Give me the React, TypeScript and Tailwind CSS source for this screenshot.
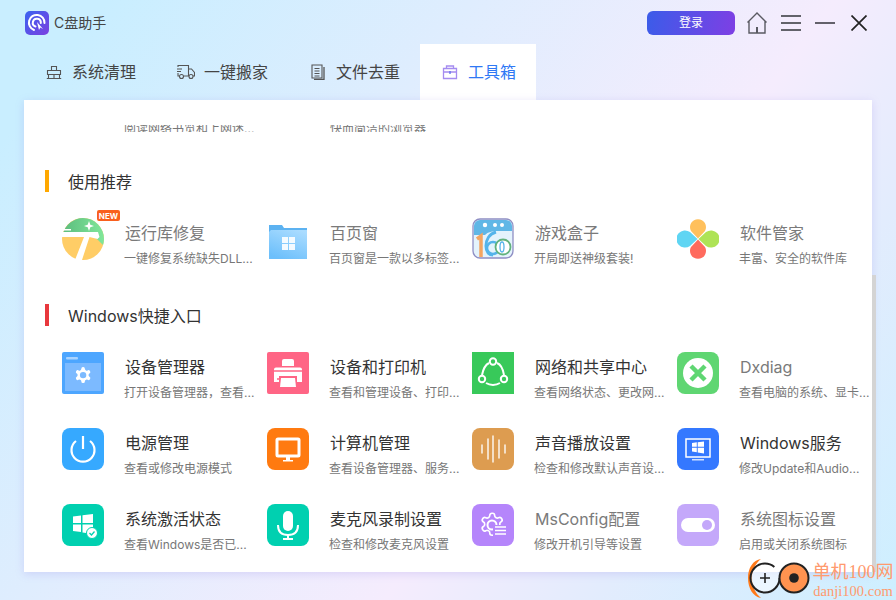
const GEAR =
  "M12.22 2h-.44a2 2 0 0 0-2 2v.18a2 2 0 0 1-1 1.73l-.43.25a2 2 0 0 1-2 0l-.15-.08a2 2 0 0 0-2.73.73l-.22.38a2 2 0 0 0 .73 2.73l.15.1a2 2 0 0 1 1 1.72v.51a2 2 0 0 1-1 1.74l-.15.09a2 2 0 0 0-.73 2.73l.22.38a2 2 0 0 0 2.73.73l.15-.08a2 2 0 0 1 2 0l.43.25a2 2 0 0 1 1 1.73V20a2 2 0 0 0 2 2h.44a2 2 0 0 0 2-2v-.18a2 2 0 0 1 1-1.73l.43-.25a2 2 0 0 1 2 0l.15.08a2 2 0 0 0 2.73-.73l.22-.39a2 2 0 0 0-.73-2.73l-.15-.08a2 2 0 0 1-1-1.74v-.5a2 2 0 0 1 1-1.74l.15-.09a2 2 0 0 0 .73-2.73l-.22-.38a2 2 0 0 0-2.73-.73l-.15.08a2 2 0 0 1-2 0l-.43-.25a2 2 0 0 1-1-1.73V4a2 2 0 0 0-2-2z";

function Svg({ children, className = "" }: { children: React.ReactNode; className?: string }) {
  return (
    <svg viewBox="0 0 42 42" className={"w-[42px] h-[42px] shrink-0 " + className}>
      {children}
    </svg>
  );
}

const RuntimeIcon = () => (
  <Svg>
    <defs>
      <linearGradient id="rtg" x1="0" y1="0" x2="1" y2="0">
        <stop offset="0" stopColor="#5dbd7e" />
        <stop offset="1" stopColor="#80e79a" />
      </linearGradient>
    </defs>
    <circle cx="21" cy="21" r="21" fill="#ffcd66" />
    <path d="M21 0a21 21 0 0 1 21 21 21 21 0 0 1-1 6L36 22 28 16H1A21 21 0 0 1 21 0z" fill="url(#rtg)" />
    <path d="M0 11h9v1.500H0zM0 14h36l1.500 5-2 2-8-2L20 42h-7l9-23H0z" fill="#fff" />
    <path d="M27 3l1.300 3.700L32 8l-3.700 1.300L27 13l-1.300-3.700L22 8l3.700-1.300z" fill="#fff" />
  </Svg>
);

const FolderIcon = () => (
  <Svg>
    <defs>
      <linearGradient id="fdg" x1="0.8" y1="0" x2="0.3" y2="1">
        <stop offset="0" stopColor="#aadcff" />
        <stop offset="1" stopColor="#6cbffb" />
      </linearGradient>
    </defs>
    <path d="M2 7h13l2 3h23v8H2z" fill="#5cb2f1" />
    <path d="M4 12h36v29H2V14z" fill="url(#fdg)" />
    <path d="M17 20h6v6h-6zM24 20h6v6h-6zM17 27h6v6h-6zM24 27h6v6h-6z" fill="#fff" fillOpacity="0.9" transform="translate(-2 -1)" />
  </Svg>
);

const GameIcon = () => (
  <Svg>
    <rect x="1" y="1" width="40" height="39" rx="7" fill="#e4f3fc" stroke="#8f8fc4" strokeWidth="1.300" />
    <path d="M2 8a6 6 0 0 1 6-6h26a6 6 0 0 1 6 6v5H26c-6 0-10 1-13 4H2z" fill="#60b7e6" />
    <circle cx="13" cy="7" r="2.200" fill="#fff" />
    <circle cx="23" cy="7" r="2" fill="#fff" />
    <circle cx="30" cy="7" r="2" fill="#fff" />
    <path d="M5 21l4-3v21" fill="none" stroke="#f3a561" strokeWidth="3.500" />
    <path d="M24 14c-7 2-10 8-10 14 0 6 3 9 7 9" fill="none" stroke="#55b4ea" strokeWidth="3" />
    <circle cx="21" cy="30" r="6" fill="none" stroke="#55b4ea" strokeWidth="2.500" />
    <circle cx="31" cy="29" r="7.500" fill="#fff" stroke="#61b27d" strokeWidth="1.800" />
    <ellipse cx="30" cy="29" rx="2" ry="5" fill="none" stroke="#55b4ea" strokeWidth="1.300" />
  </Svg>
);

const CloverIcon = () => (
  <Svg>
    <path d="M21 20.500L14 13a8 8 0 1 1 14 0z" fill="#ffc05c" />
    <path d="M21.500 21L29 14a8.600 8.600 0 1 1 0 14z" fill="#aee356" />
    <path d="M21 21.500L28 29a8 8 0 1 1-14 0z" fill="#ff6b5e" />
    <path d="M20.500 21L13 28a8.600 8.600 0 1 1 0-14z" fill="#5fd5f3" />
  </Svg>
);

const DeviceIcon = () => (
  <Svg className="bg-[#4da6ff] rounded-[2px]">
    <rect x="3" y="11" width="36" height="28" fill="#7cbaff" />
    <rect x="4" y="5" width="12" height="2.500" rx="1" fill="#a9d3ff" />
    <g transform="translate(11.500 13.500) scale(0.8)">
      <path d={GEAR} fill="#fff" />
      <circle cx="12" cy="12" r="4" fill="#7cbaff" />
    </g>
  </Svg>
);

const PrinterIcon = () => (
  <Svg className="bg-[#ff6585] rounded-[2px]">
    <path d="M15 14v-5a2 2 0 0 1 2-2h8a2 2 0 0 1 2 2v5z" fill="#fff" />
    <path d="M9 15.500h24a2 2 0 0 1 2 2V30h-5v-6H12v6H7V17.500a2 2 0 0 1 2-2z" fill="#fff" />
    <path d="M7 19h28" stroke="#ff6585" strokeWidth="1.500" />
    <path d="M14 26h14l1 9H13z" fill="#fff" />
    <circle cx="11" cy="27" r="1" fill="#ff6585" />
  </Svg>
);

const NetworkIcon = () => (
  <Svg className="bg-[#38c95a]">
    <g fill="none" stroke="#fff" strokeWidth="2">
      <circle cx="21" cy="9.500" r="3.200" />
      <circle cx="10" cy="27" r="3.200" />
      <circle cx="32" cy="27" r="3.200" />
      <path d="M25 11c4 1.500 6 6 7 12" />
      <path d="M17 11c-4 2-6 7-7 12" />
      <path d="M14 31c4 2.500 10 2.500 14 0" />
    </g>
  </Svg>
);

const DxIcon = () => (
  <Svg className="bg-[#5fd672] rounded-lg">
    <circle cx="21" cy="21" r="15" fill="#fff" />
    <path d="M14 14l14 14M28 14L14 28" stroke="#5fd672" strokeWidth="4.500" />
  </Svg>
);

const PowerIcon = () => (
  <Svg className="bg-[#36a9ff] rounded-lg">
    <path d="M14 13a11.500 11.500 0 1 0 14 0" fill="none" stroke="#fff" strokeWidth="2.200" />
    <path d="M21 8v13" stroke="#fff" strokeWidth="2.200" />
  </Svg>
);

const MonitorIcon = () => (
  <Svg className="bg-[#ff7a10] rounded-lg">
    <rect x="10" y="11" width="22" height="17" rx="1" fill="#ff7a10" stroke="#fff" strokeWidth="3" />
    <path d="M19 29h4v3h-4zM16 32h10v1.500H16z" fill="#fff" />
  </Svg>
);

const SoundIcon = () => (
  <Svg className="bg-[#dd9c50] rounded-lg">
    <path d="M10 17v8M16 11v20M21 8v26M27 12v18M33 17v8" stroke="#fff" strokeWidth="1.500" strokeOpacity="0.9" strokeLinecap="round" />
  </Svg>
);

const WinPanes = ({ x, y, s }: { x: number; y: number; s: number }) => (
  <g transform={`translate(${x} ${y}) scale(${s})`}>
    <path d="M0 1.600L8 .5V8H0zM9.500 .3L20 -1v9H9.500zM0 9.500h8v7.500L0 16zM9.500 9.500H20V19l-10.500-1.500z" fill="#fff" />
  </g>
);

const WinServiceIcon = () => (
  <Svg className="bg-[#3478ff] rounded-lg">
    <rect x="9" y="11" width="24" height="18" fill="none" stroke="#fff" strokeWidth="1.500" />
    <path d="M15 31h12v1.500H15z" fill="#cfe0ff" />
    <WinPanes x={15} y={14} s={0.6} />
  </Svg>
);

const ActivateIcon = () => (
  <Svg className="bg-[#00d0b0] rounded-lg">
    <WinPanes x={11} y={11} s={1} />
    <circle cx="30" cy="29" r="5.500" fill="#fff" stroke="#00d0b0" strokeWidth="1" />
    <path d="M27.500 29l2 2 3-3.500" fill="none" stroke="#00d0b0" strokeWidth="1.300" />
  </Svg>
);

const MicIcon = () => (
  <Svg className="bg-[#00d0b0] rounded-lg">
    <rect x="16" y="7" width="10" height="20" rx="5" fill="#fff" />
    <path d="M11 21c0 7 4 10 10 10s10-3 10-10" fill="none" stroke="#fff" strokeWidth="2" />
    <path d="M21 31v3M16 35h10" stroke="#fff" strokeWidth="2" />
  </Svg>
);

const ConfigIcon = () => (
  <Svg className="bg-[#b585fb] rounded-lg">
    <g transform="translate(7 7) scale(1.100)">
      <path d={GEAR} fill="none" stroke="#fff" strokeWidth="1.500" />
    </g>
    <circle cx="20" cy="21" r="4.500" fill="none" stroke="#fff" strokeWidth="2" />
    <rect x="21" y="21" width="14" height="11" fill="#b585fb" />
    <path d="M23 23h11M23 26.500h11M23 30h11" stroke="#fff" strokeWidth="1.500" />
  </Svg>
);

const SwitchIcon = () => (
  <Svg className="bg-[#c4a8fa] rounded-lg">
    <rect x="4" y="14" width="34" height="14" rx="7" fill="#fff" />
    <circle cx="30" cy="21" r="5" fill="#c4a8fa" />
  </Svg>
);

const RECOMMEND = [
  { icon: <RuntimeIcon />, title: "运行库修复", sub: "一键修复系统缺失DLL...", dim: true, isNew: true },
  { icon: <FolderIcon />, title: "百页窗", sub: "百页窗是一款以多标签...", dim: true },
  { icon: <GameIcon />, title: "游戏盒子", sub: "开局即送神级套装!", dim: true },
  { icon: <CloverIcon />, title: "软件管家", sub: "丰富、安全的软件库", dim: true },
];

const SHORTCUTS = [
  { icon: <DeviceIcon />, title: "设备管理器", sub: "打开设备管理器\uFF0C查看..." },
  { icon: <PrinterIcon />, title: "设备和打印机", sub: "查看和管理设备、打印..." },
  { icon: <NetworkIcon />, title: "网络和共享中心", sub: "查看网络状态、更改网..." },
  { icon: <DxIcon />, title: "Dxdiag", sub: "查看电脑的系统、显卡...", dim: true },
  { icon: <PowerIcon />, title: "电源管理", sub: "查看或修改电源模式" },
  { icon: <MonitorIcon />, title: "计算机管理", sub: "查看设备管理器、服务..." },
  { icon: <SoundIcon />, title: "声音播放设置", sub: "检查和修改默认声音设..." },
  { icon: <WinServiceIcon />, title: "Windows服务", sub: "修改Update和Audio..." },
  { icon: <ActivateIcon />, title: "系统激活状态", sub: "查看Windows是否已..." },
  { icon: <MicIcon />, title: "麦克风录制设置", sub: "检查和修改麦克风设置" },
  { icon: <ConfigIcon />, title: "MsConfig配置", sub: "修改开机引导等设置", dim: true },
  { icon: <SwitchIcon />, title: "系统图标设置", sub: "启用或关闭系统图标", dim: true },
];

type Tool = { icon: React.ReactNode; title: string; sub: string; dim?: boolean; isNew?: boolean };

function ToolItem({ icon, title, sub, dim, isNew }: Tool) {
  return (
    <div className="relative flex h-[42px] w-[205px]">
      {icon}
      {isNew && (
        <span className="absolute left-[35px] top-[-8px] flex h-[11px] w-[23px] items-center justify-center rounded-[2px] bg-[#f9601e] text-[8px] font-bold leading-none text-white">
          NEW
        </span>
      )}
      <div className="ml-[21px] whitespace-nowrap">
        <div className={"h-[30px] text-[16px] leading-[30px] " + (dim ? "text-[#7a7a7a]" : "text-[#333]")}>{title}</div>
        <div className="-ml-px text-[12px] leading-[22px] text-[#777]">{sub}</div>
      </div>
    </div>
  );
}

function Section({ color, title, items }: { color: string; title: string; items: Tool[] }) {
  return (
    <section>
      <div className="flex h-[22px] items-center pl-[21px]">
        <div className={"h-[22px] w-[4px] " + color} />
        <h2 className="ml-[19px] pt-[2px] text-[16px] font-normal text-[#333]">{title}</h2>
      </div>
      <div className="mt-[26px] grid grid-cols-[repeat(4,205px)] gap-y-[34px] pl-[38px]">
        {items.map((t) => (
          <ToolItem key={t.title} {...t} />
        ))}
      </div>
    </section>
  );
}

const TABS = [
  {
    name: "系统清理",
    width: "w-[131px]",
    gap: "gap-[10px]",
    icon: (
      <svg viewBox="0 0 16 16" className="h-4 w-4" fill="none" stroke="#555" strokeWidth="1.100">
        <path d="M5.500 2.500h5v4h-5zM1.500 6.500h13v4h-13zM.8 14.500h14.400M2.500 10.500v4M13.500 10.500v4M8 10.500v4" />
      </svg>
    ),
  },
  {
    name: "一键搬家",
    width: "w-[134px]",
    gap: "gap-[9px]",
    icon: (
      <svg viewBox="0 0 18 16" className="h-4 w-[18px]" fill="none" stroke="#555" strokeWidth="1.100">
        <path d="M1 3V1.500h10.500V12H7M2 12H1V9M11.500 5h3l3 3.500V12h-1.500M11.500 12H12" />
        <path d="M0 5h5M0 7.500h4" />
        <circle cx="4.500" cy="12.500" r="2" />
        <circle cx="14" cy="12.500" r="2" />
      </svg>
    ),
  },
  {
    name: "文件去重",
    width: "w-[131px]",
    gap: "gap-[11px]",
    icon: (
      <svg viewBox="0 0 14 16" className="h-4 w-[14px]" fill="none" stroke="#555" strokeWidth="1.100">
        <path d="M1 1h10v13H1z" />
        <path d="M13 3v12.500H3" strokeWidth="1.300" />
        <path d="M3.500 4.500h5M3.500 7h5M3.500 9.500h5M3.500 12h5" />
      </svg>
    ),
  },
];

export default function App() {
  return (
    <div className="relative flex h-[600px] w-[896px] flex-col overflow-hidden bg-[linear-gradient(127deg,#c9eeff_8%,#f5ecfd_62%,#e2ecfd_78%,#cdefff_100%)] font-['Inter','Noto_Sans_CJK_SC',sans-serif]">
      {/* Title bar */}
      <header className="flex h-[44px] items-center pl-[25px] pr-[29px] pt-[1px]">
        <svg viewBox="0 0 24 24" className="h-6 w-6 rounded-[5px]">
          <defs>
            <linearGradient id="lg" x1="0" y1="0" x2="1" y2="1">
              <stop offset="0" stopColor="#3a63f0" />
              <stop offset="1" stopColor="#7c3fe0" />
            </linearGradient>
          </defs>
          <rect width="24" height="24" fill="url(#lg)" />
          <path d="M9 19A7.800 7.800 0 1 1 19.500 12" fill="none" stroke="#fff" strokeWidth="2" strokeLinecap="round" />
          <path d="M10.500 15.500A4 4 0 1 1 15.800 12" fill="none" stroke="#fff" strokeWidth="2" strokeLinecap="round" />
          <path d="M12 11l2 8 1.300-2.500L18 18z" fill="#fff" />
        </svg>
        <span className="ml-[5px] text-[14px] text-[#444]">C盘助手</span>

        <div className="ml-auto flex items-center">
          <button className="h-[24px] w-[88px] rounded-md bg-[linear-gradient(100deg,#3b5ce9,#7e3fe4)] text-[12px] text-white">
            登录
          </button>
          <svg viewBox="0 0 20 22" className="ml-[12px] h-[22px] w-5" fill="none" stroke="#5a5a62" strokeWidth="1.400">
            <path d="M.5 10.500L10 1l9.500 9.500M2 9v12h16V9" />
            <path d="M10 15v6" strokeWidth="2" />
          </svg>
          <svg viewBox="0 0 20 16" className="ml-[14px] h-4 w-5" fill="none" stroke="#62626a" strokeWidth="1.800">
            <path d="M0 1h20M0 8h20M0 15h20" />
          </svg>
          <svg viewBox="0 0 20 2" className="ml-[14px] h-[2px] w-5" fill="none" stroke="#33333a" strokeWidth="1.500">
            <path d="M0 1h20" />
          </svg>
          <svg viewBox="0 0 16 16" className="ml-[16px] h-4 w-4" fill="none" stroke="#222" strokeWidth="1.700">
            <path d="M.5.5l15 15M15.500.5l-15 15" />
          </svg>
        </div>
      </header>

      {/* Tabs */}
      <nav className="flex h-[56px] pl-[24px]">
        {TABS.map((t) => (
          <div key={t.name} className={"flex items-center pl-[22px] text-[16px] text-[#444] " + t.width + " " + t.gap}>
            {t.icon}
            <span>{t.name}</span>
          </div>
        ))}
        <div className="flex w-[116px] items-center gap-[10px] bg-white pl-[22px] text-[16px] text-[#2f78f5]">
          <svg viewBox="0 0 16 16" className="h-4 w-4" fill="none" stroke="#a58cf0" strokeWidth="1.300">
            <path d="M1.500 4.500h13v10h-13zM4.500 4.500V2h7v2.500M1.500 8h13" />
            <path d="M8 7v3" stroke="#5a6ee8" />
          </svg>
          <span>工具箱</span>
        </div>
      </nav>

      <div className="flex h-[472px] pl-[24px]">
        <main className="h-full w-[848px] overflow-hidden bg-white shadow-[0_2px_8px_rgba(150,130,230,0.25)]">
          {/* Half scrolled row at the top */}
          <div className="mt-[25px] flex h-[7px] overflow-hidden pl-[100px] text-[12px] leading-[7px] text-[#777]">
            <span className="w-[206px]">阅读网络书览和上网迷...</span>
            <span>快而简洁的浏览器</span>
          </div>
          <div className="mt-[38px] flex flex-col gap-[44px]">
            <Section color="bg-[#ffa800]" title="使用推荐" items={RECOMMEND} />
            <Section color="bg-[#e8383d]" title="Windows快捷入口" items={SHORTCUTS} />
          </div>
        </main>
        <div className="h-[297px] w-[4px] self-end bg-[#d4d4d4]" />
      </div>

      {/* Watermark */}
      <div className="absolute bottom-0 right-[3px] flex h-[42px] items-start">
        <svg viewBox="0 0 64 42" className="h-[42px] w-[64px]">
          <path d="M14 1c-8 1-13 9-13 19s5 19 13 20c-5-4-9-11-9-20S9 5 14 1z" fill="#ff7a1a" />
          <circle cx="18" cy="20" r="14.500" fill="#fff" fillOpacity="0.5" stroke="#222" strokeWidth="2" strokeDasharray="78 14" />
          <path d="M13 20h10M18 15v10" stroke="#222" strokeWidth="1.600" />
          <circle cx="47" cy="20" r="14.500" fill="#ff9350" stroke="#222" strokeWidth="2" />
          <circle cx="47" cy="20" r="4.800" fill="#222" />
        </svg>
        <div className="ml-[2px] flex w-[80px] flex-col items-center whitespace-nowrap font-['Liberation_Serif','Noto_Sans_CJK_SC',serif] text-[#ff9a6e]">
          <span className="mt-[3px] text-[18px] leading-[22px]">单机100网</span>
          <span className="text-[14.500px] leading-[16px]">danji100.com</span>
        </div>
      </div>
    </div>
  );
}
